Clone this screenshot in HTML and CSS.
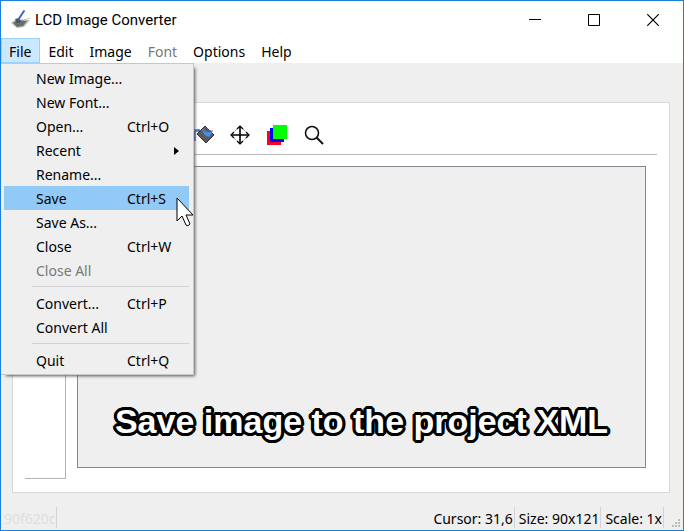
FILE: index.html
```html
<!DOCTYPE html>
<html lang="en">
<head>
<meta charset="utf-8">
<title>LCD Image Converter</title>
<link rel="stylesheet" href="styles.css">
</head>
<body>
<div class="window">
  <header class="titlebar">
    <svg class="app-icon" width="22" height="22" viewBox="0 0 22 22" aria-hidden="true">
      <path d="M1 14 6 10 20 11 14 18 7 19Z" fill="#b9bfba"/>
      <path d="M3 14 7 11 17 12 13 17 7 18Z" fill="#66706a"/>
      <path d="M5 10 9 9 11 13 7 14Z" fill="#584b43"/>
      <path d="M8 11 14 2" stroke="#3e63d8" stroke-width="2" stroke-linecap="round"/>
      <path d="M14 11 20 9" stroke="#c3c7c5" stroke-width="1"/>
    </svg>
    <h1 class="title">LCD Image Converter</h1>
    <div class="controls">
      <button aria-label="Minimize"><svg width="12" height="12" viewBox="0 0 12 12"><path d="M0 5.500H12" stroke="#000"/></svg></button>
      <button aria-label="Maximize"><svg width="12" height="12" viewBox="0 0 12 12"><path d="M.5.500H11.500V11.500H.5Z" fill="none" stroke="#000"/></svg></button>
      <button aria-label="Close"><svg width="12" height="12" viewBox="0 0 12 12"><path d="M.3.300 11.700 11.700M11.700.300.300 11.700" stroke="#000" stroke-width="1.200"/></svg></button>
    </div>
  </header>

  <nav class="menubar">
    <button class="open">File</button>
    <button>Edit</button>
    <button>Image</button>
    <button disabled>Font</button>
    <button>Options</button>
    <button>Help</button>
    <div class="menu" role="menu">
      <button role="menuitem"><span>New Image...</span></button>
      <button role="menuitem"><span>New Font...</span></button>
      <button role="menuitem"><span>Open...</span><kbd>Ctrl+O</kbd></button>
      <button role="menuitem"><span>Recent</span><svg class="submenu" width="5" height="8" viewBox="0 0 5 8" aria-hidden="true"><path d="M0 0 5 4 0 8Z"/></svg></button>
      <button role="menuitem"><span>Rename...</span></button>
      <button role="menuitem" class="selected"><span>Save</span><kbd>Ctrl+S</kbd>
        <svg class="cursor" width="19" height="31" viewBox="0 0 19 31" aria-hidden="true"><path d="M1 1V24L6 19 10 28Q12 30 14 27L10 18H17Z" fill="#fff" stroke="#000"/></svg>
      </button>
      <button role="menuitem"><span>Save As...</span></button>
      <button role="menuitem"><span>Close</span><kbd>Ctrl+W</kbd></button>
      <button role="menuitem" disabled><span>Close All</span></button>
      <hr>
      <button role="menuitem"><span>Convert...</span><kbd>Ctrl+P</kbd></button>
      <button role="menuitem"><span>Convert All</span></button>
      <hr>
      <button role="menuitem"><span>Quit</span><kbd>Ctrl+Q</kbd></button>
    </div>
  </nav>

  <main class="panel">
    <div class="toolbar">
      <button aria-label="Fill"><svg width="24" height="22" viewBox="0 0 24 22"><path d="M2.500 17V6.500H8" fill="none" stroke="#3f73d0" stroke-width="2.500"/><path d="M13 2 22 11 14 19 5 10Z" fill="#5a5a5a" stroke="#333"/><path d="M10 6 14 3 20 9 17 13Q12 12 10 6Z" fill="#4d8bea"/><path d="M12 5 14 3 20 8H15Z" fill="#555"/><path d="M9 7H21" stroke="#5c6470"/></svg></button>
      <button aria-label="Move"><svg width="20" height="20" viewBox="0 0 20 20"><path d="M10 1V19M1 10H19" stroke="#000" stroke-width="1.600"/><path d="M7 4 10 1 13 4M7 16 10 19 13 16M4 7 1 10 4 13M16 7 19 10 16 13" fill="none" stroke="#000" stroke-width="1.200"/><path d="M7 4 4 7M13 4 16 7M4 13 7 16M16 13 13 16" stroke="#888" stroke-dasharray="1 1"/></svg></button>
      <button aria-label="Colors"><svg width="22" height="22" viewBox="0 0 22 22"><path d="M1 7H15V21H1Z" fill="#ff0020"/><path d="M4 4H18V18H4Z" fill="#00f"/><path d="M7 1H21V15H7Z" fill="#0f0"/></svg></button>
      <button aria-label="Zoom"><svg width="20" height="20" viewBox="0 0 20 20"><circle cx="8" cy="8" r="6.500" fill="none" stroke="#111" stroke-width="1.600"/><path d="M12.500 12.500 19 19" stroke="#111" stroke-width="2"/></svg></button>
    </div>
    <div class="workspace">
      <aside class="tools"></aside>
      <section class="canvas"><p class="caption">Save image to the project XML</p></section>
    </div>
  </main>

  <footer class="statusbar">
    <span class="revision">90f620c</span>
    <span>Cursor: 31,6</span>
    <span>Size: 90x121</span>
    <span>Scale: 1x</span>
    <svg class="grip" width="9" height="9" viewBox="0 0 9 9" aria-hidden="true"><path d="M6 0H8V2H6ZM6 3H8V5H6ZM3 3H5V5H3ZM6 6H8V8H6ZM3 6H5V8H3ZM0 6H2V8H0Z" fill="#bdbdbd"/></svg>
  </footer>
</div>
</body>
</html>
```
FILE: styles.css
```css
* { box-sizing: border-box; }
body { margin: 0; font: 14px/20px "Noto Sans", sans-serif; color: #000; }
button { font: inherit; color: inherit; border: 0; background: none; padding: 0; margin: 0; }
svg { display: block; }

.window { min-height: 100vh; display: flex; flex-direction: column; border: 1px solid #1a80d9; background: #efefef; }

.titlebar { display: flex; align-items: center; height: 37px; padding-left: 9px; background: #fff; }
.title { flex: 1; margin: 0 0 0 3px; font: 15px/20px Roboto, sans-serif; }
.controls { display: flex; gap: 47px; padding-right: 24px; }

.menubar { position: relative; display: flex; height: 25px; background: #fff; }
.menubar > button { padding: 2px 7px 0; border: 1px solid transparent; }
.menubar > .open { padding-right: 8px; background: #cce8ff; border-color: #99d1ff; }
button:disabled { color: #787878; }

.menu { position: absolute; z-index: 2; top: 100%; left: 0; width: 193px; padding: 2px 4px 2px 3px; background: #efefef; border: 1px solid #c8c8c8; border-left: 0; box-shadow: 3px 3px 3px -2px #555; }
.menu button { position: relative; display: grid; grid-template-columns: 91px 1fr; align-items: center; width: 100%; height: 24px; padding: 2px 0 0 32px; text-align: left; }
.menu kbd { font: inherit; }
.menu .selected { background: #91c9f7; }
.menu hr { height: 1px; margin: 4px 0 4px 28px; border: 0; background: #d2d2d2; }
.submenu { justify-self: end; margin-right: 10px; }
.cursor { position: absolute; z-index: 3; left: 172px; top: 11px; }

.panel { flex: 1; display: flex; flex-direction: column; margin: 39px 13px 0 11px; padding: 0 12px 13px; background: #fff; border: 1px solid #d8d8d8; }
.toolbar { display: flex; align-items: center; gap: 15px; height: 52px; padding: 12px 0 0 167px; border-bottom: 1px solid #b8b8b8; }
.toolbar button { display: grid; place-items: center; width: 22px; }
.workspace { flex: 1; display: flex; gap: 11px; }
.tools { width: 41px; border: solid #b4b4b4; border-width: 0 1px 1px 0; }
.canvas { flex: 1; display: flex; align-items: flex-end; justify-content: center; margin: 11px 11px 11px 0; background: #efefef; border: 1px solid #828790; }
.caption {
  margin: 0 0 30px;
  font: bold 34px/32px "Liberation Sans", sans-serif;
  color: #fff;
  white-space: nowrap;
  text-shadow:
    3px 0 #000, -3px 0 #000, 0 3px #000, 0 -3px #000,
    2px 2px #000, -2px 2px #000, 2px -2px #000, -2px -2px #000,
    3px 1px #000, 3px -1px #000, -3px 1px #000, -3px -1px #000,
    1px 3px #000, -1px 3px #000, 1px -3px #000, -1px -3px #000;
}

.statusbar { display: flex; height: 37px; padding: 14px 2px 2px 0; line-height: 23px; }
.statusbar span { padding: 0 1px 0 4px; border-right: 1px solid #d4d4d4; }
.statusbar .revision { margin-right: auto; padding: 0 0 0 3px; color: #dedede; }
.grip { align-self: flex-end; margin-left: 8px; }
```
